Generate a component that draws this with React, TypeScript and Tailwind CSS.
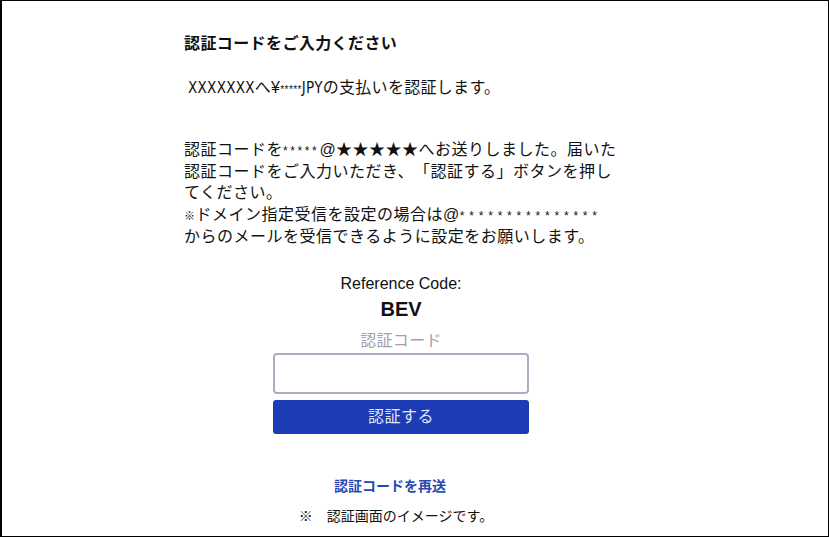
import React from "react";

export default function App() {
  const font = { fontFamily: '"Liberation Sans", "Noto Sans CJK JP", sans-serif' };
  const narrow = { fontFamily: '"Liberation Sans Narrow", "Arial Narrow", "DejaVu Sans Condensed", "Noto Sans CJK JP", sans-serif' };
  return (
    <div
      className="w-[829px] h-[537px] bg-white border-t border-r border-b border-l-2 border-black box-border overflow-hidden text-[#111] [text-spacing-trim:space-all]"
      style={font}
    >
      <div className="ml-[182px] w-[440px] pt-[31px] flex flex-col">
        <div className="text-[16px] leading-[24px] font-bold tracking-[0.4px]">認証コードをご入力ください</div>
        <div className="mt-[20px] text-[16px] leading-[24px] pl-[4px] tracking-[0.3px]">
          <span className="text-[15px] leading-none" style={narrow}>XXXXXXX</span>へ¥
          <span className="text-[10px] leading-none tracking-[0.4px]">*****</span>
          <span className="text-[15px] leading-none" style={narrow}>JPY</span>の支払いを認証します。
        </div>
        <div className="mt-[39px] text-[16px] leading-[21.7px] tracking-[0.5px]">
          <div>
            認証コードを<span className="text-[12px] leading-none tracking-[2.6px]">*****</span>@★★★★★へお送りしました。届いた
          </div>
          <div>認証コードをご入力いただき、「認証する」ボタンを押し</div>
          <div>てください。</div>
          <div>
            <span className="text-[11px] leading-none">※</span>ドメイン指定受信を設定の場合は@
            <span className="text-[12px] leading-none tracking-[4.8px]">***************</span>
          </div>
          <div>からのメールを受信できるように設定をお願いします。</div>
        </div>
      </div>
      <div className="ml-[271px] w-[256px] flex flex-col items-center">
        <div className="mt-[26px] text-[16px] leading-[20px]">Reference Code:</div>
        <div className="mt-[3px] text-[20px] leading-[24px] font-bold">BEV</div>
        <div className="mt-[10px] text-[16px] leading-[20px] text-[#a49fae] tracking-[0.3px]">認証コード</div>
        <div className="mt-[2px] w-[256px] h-[41px] border-2 border-[#b0acc0] rounded-[4px] bg-white"></div>
        <div className="mt-[6px] w-[256px] h-[34px] rounded-[3px] bg-[#1b3cb4] flex items-center justify-center text-[16px] text-[#e1e4f6] tracking-[0.5px]">
          認証する
        </div>
        <div className="mt-[42px] text-[14px] leading-[20px] font-bold text-[#2a48b0] -ml-[22px]">認証コードを再送</div>
        <div className="mt-[10px] text-[14px] leading-[20px] -ml-[10px]">※　認証画面のイメージです。</div>
      </div>
    </div>
  );
}
